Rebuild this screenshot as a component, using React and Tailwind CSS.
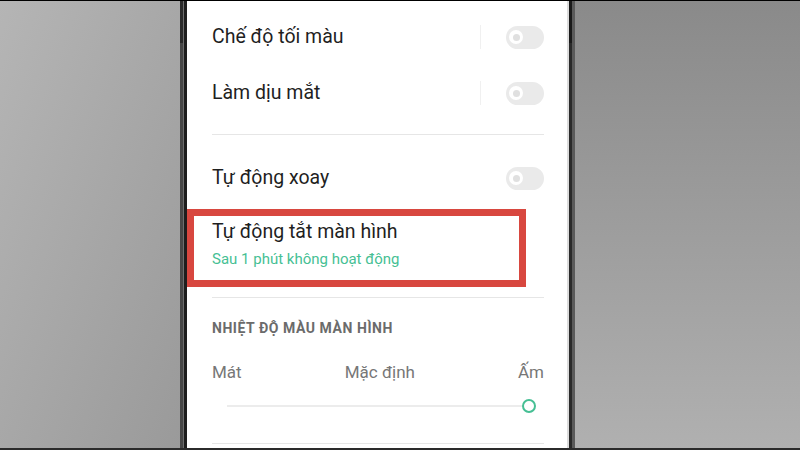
import React from "react";

const font = { fontFamily: "Roboto, 'Noto Sans', sans-serif" };

function Toggle({ sep = true }) {
  return (
    <div className="flex items-center">
      {sep && <div className="w-px h-[24px] bg-[#f0f0f0] mr-[25px]" />}
      <div className="w-[38px] h-[23px] rounded-full bg-[#eaeaea] flex items-center pl-[3px]">
        <div className="w-[14px] h-[14px] rounded-full bg-white flex items-center justify-center">
          <div className="w-[7px] h-[7px] rounded-full bg-[#e0e0e0]" />
        </div>
      </div>
    </div>
  );
}

export default function App() {
  return (
    <div className="w-[800px] h-[450px] flex flex-col overflow-hidden" style={font}>
      <div className="h-px bg-black" />
      <div className="flex flex-1 min-h-0">
        <div className="w-[180px] bg-linear-to-br from-[#b5b5b5] to-[#9a9a9a]" />
        <div className="w-[7px] flex">
          <div className="w-[3px] flex flex-col">
            <div className="h-[42px] bg-[#2a2a2a]" />
            <div className="flex-1 bg-[#474747]" />
          </div>
          <div className="w-px bg-[#6e6e6e]" />
          <div className="w-[3px] bg-[#1e1e1e]" />
        </div>
        <div className="w-[380px] bg-white relative pl-[25px] pr-[23px] pt-[8px] flex flex-col">
          <div className="h-[56px] flex items-center justify-between">
            <span className="text-[19.5px] text-[#1f1f1f]">Chế độ tối màu</span>
            <Toggle />
          </div>
          <div className="h-[56px] flex items-center justify-between">
            <span className="text-[19.5px] text-[#1f1f1f]">Làm dịu mắt</span>
            <Toggle />
          </div>
          <div className="h-px bg-[#e6e6e6] mt-[13px]" />
          <div className="h-[56px] mt-[15px] flex items-center justify-between">
            <span className="text-[19.5px] text-[#1f1f1f]">Tự động xoay</span>
            <Toggle sep={false} />
          </div>
          <div className="pt-[13px] flex flex-col">
            <span className="text-[19.5px] leading-[26px] text-[#1f1f1f]">Tự động tắt màn hình</span>
            <span className="text-[15px] leading-[20px] mt-[4px] text-[#46bf94]">Sau 1 phút không hoạt động</span>
          </div>
          <div className="h-px bg-[#e6e6e6] mt-[28px]" />
          <div className="mt-[20px] h-[20px] leading-[20px] text-[14px] font-bold text-[#6b6b6b] tracking-[0.55px]">
            NHIỆT ĐỘ MÀU MÀN HÌNH
          </div>
          <div className="mt-[22px] h-[24px] leading-[24px] flex justify-between text-[17px] text-[#777777]">
            <span>Mát</span>
            <span>Mặc định</span>
            <span>Ấm</span>
          </div>
          <div className="mt-[16px] h-[12px] flex items-center pl-[15px] pr-[8px]">
            <div className="flex-1 h-[2px] bg-[#ececec]" />
            <div className="w-[14px] h-[14px] rounded-full border-[2.5px] border-[#46bf94] bg-white -ml-[1px]" />
          </div>
          <div className="h-px bg-[#e6e6e6] mt-[31px]" />
          <div className="absolute left-0 top-[208px] w-[339px] h-[78px] border-[7px] border-[#d8473f]" />
        </div>
        <div className="w-[8px] flex">
          <div className="w-[2px] bg-[#dcdcdc]" />
          <div className="w-[3px] flex flex-col">
            <div className="h-[42px] bg-[#1a1a1a]" />
            <div className="flex-1 bg-[#2a2a2a]" />
          </div>
          <div className="w-[3px] bg-[#5a5a5a]" />
        </div>
        <div className="flex-1 bg-linear-to-b from-[#8a8a8a] to-[#b0b0b0]" />
      </div>
      <div className="h-[2px] bg-[#2b2b2b]" />
    </div>
  );
}
